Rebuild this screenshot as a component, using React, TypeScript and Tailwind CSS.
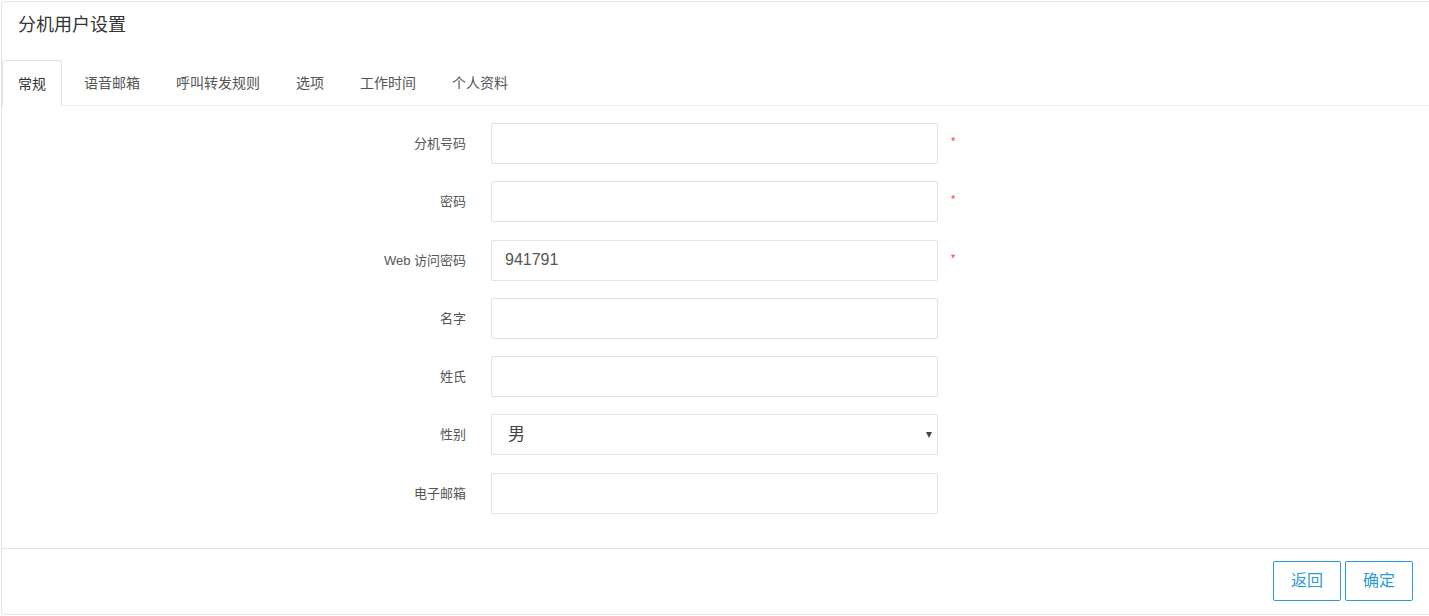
const tabs = ['常规', '语音邮箱', '呼叫转发规则', '选项', '工作时间', '个人资料']

type Field = { label: string; value?: string; required?: boolean; select?: boolean }

const fields: Field[] = [
  { label: '分机号码', required: true },
  { label: '密码', required: true },
  { label: 'Web 访问密码', value: '941791', required: true },
  { label: '名字' },
  { label: '姓氏' },
  { label: '性别', value: '男', select: true },
  { label: '电子邮箱' },
]

function Row({ field }: { field: Field }) {
  return (
    <div className="flex items-center h-[41px]">
      <label className="w-[464px] text-right text-[13px] text-[#555] leading-[41px]">{field.label}</label>
      <div className="ml-[25px] w-[447px] h-[41px] border border-[#e2e2e2] rounded-[2px] bg-white flex items-center relative">
        {field.select ? (
          <>
            <span className="pl-[16px] text-[17px] text-[#444]">{field.value}</span>
            <span className="absolute right-[5px] top-[17px] w-0 h-0 border-l-[3.5px] border-r-[3.5px] border-t-[6px] border-l-transparent border-r-transparent border-t-[#444]" />
          </>
        ) : (
          <span className="pl-[13px] text-[16px] text-[#555]">{field.value}</span>
        )}
      </div>
      {field.required && (
        <span className="ml-[13px] self-start mt-[13px] text-[11px] leading-none text-[#f33]">*</span>
      )}
    </div>
  )
}

export default function App() {
  return (
    <div
      className="w-[1429px] h-[616px] overflow-hidden bg-white"
      style={{ fontFamily: '"Liberation Sans", "Noto Sans CJK SC", sans-serif' }}
    >
      <div className="ml-px mt-px w-[1432px] border border-[#e3e3e3] rounded-[3px]">
        <div className="h-[45px] pl-[16px] pt-[11px] text-[18px] leading-[24px] text-[#333]">分机用户设置</div>
        <div className="mt-[13px] flex h-[46px] border-b border-[#efefef]">
          {tabs.map((t, i) => (
            <div
              key={t}
              className={
                i === 0
                  ? 'h-[46px] px-[15px] mr-[6px] border border-b-0 border-[#e3e3e3] rounded-t-[3px] bg-white -mb-px text-[14px] text-[#333] leading-[46px]'
                  : 'h-[45px] pl-[16px] pr-[15px] mr-[5px] text-[14px] text-[#555] leading-[46px]'
              }
            >
              {t}
            </div>
          ))}
        </div>
        <div className="pt-[17px] pb-[34px] flex flex-col gap-[17.3px] border-b border-[#e5e5e5]">
          {fields.map((f) => (
            <Row key={f.label} field={f} />
          ))}
        </div>
        <div className="h-[65px] flex items-center justify-end gap-[4px] pr-[19px]">
          <button className="w-[68px] h-[40px] border border-[#2c9bd5] rounded-[2px] text-[16px] text-[#2c9bd5] bg-white">返回</button>
          <button className="w-[68px] h-[40px] border border-[#2c9bd5] rounded-[2px] text-[16px] text-[#2c9bd5] bg-white">确定</button>
        </div>
      </div>
    </div>
  )
}
